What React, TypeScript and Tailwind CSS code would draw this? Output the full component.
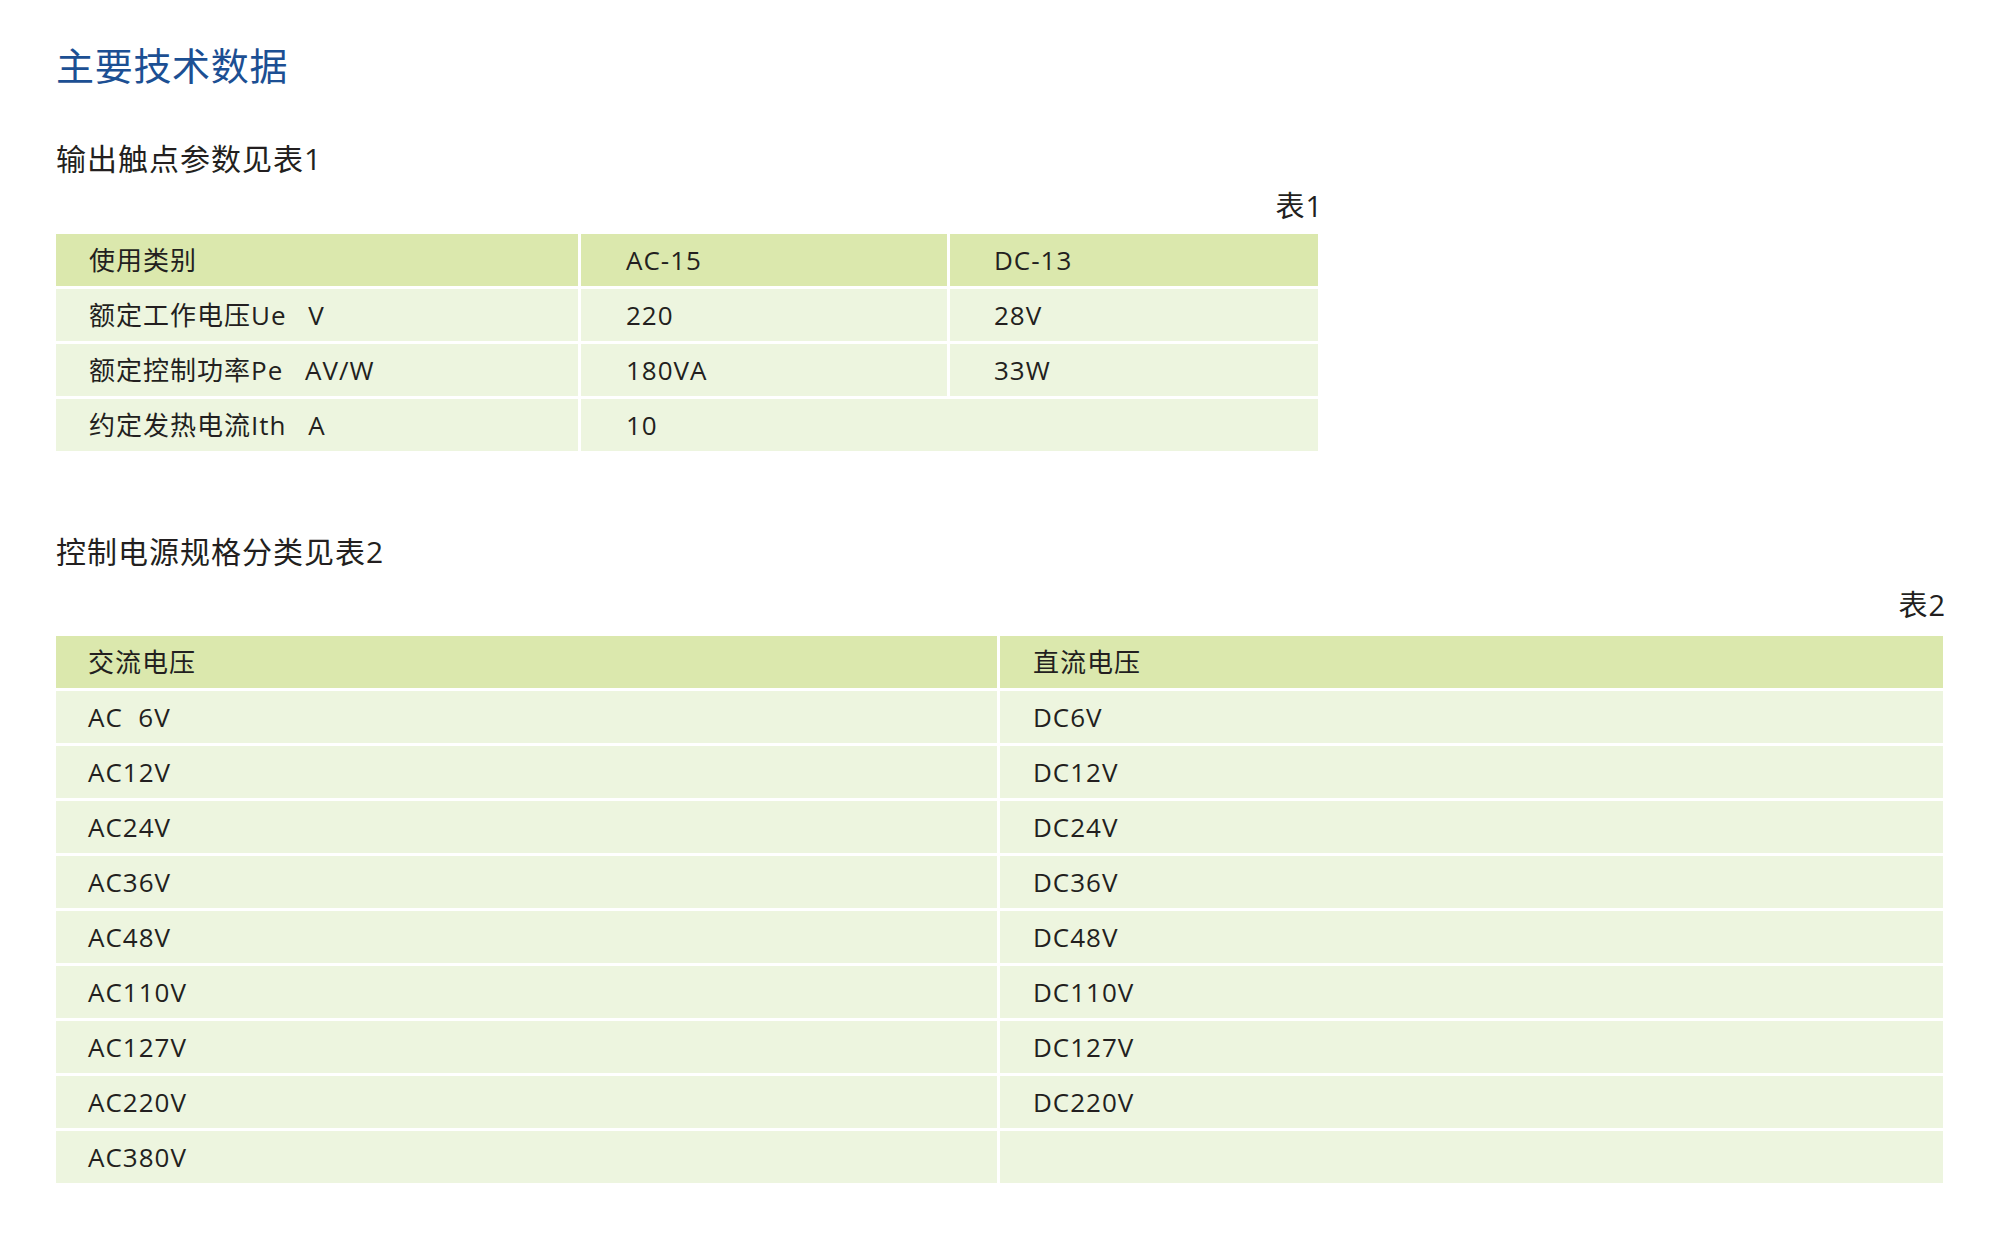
import React from "react";

const font = { fontFamily: '"Open Sans", "Noto Sans CJK SC", sans-serif' };

const t1Rows = [
  ["额定工作电压Ue\u2002 V", "220", "28V"],
  ["额定控制功率Pe\u2002 AV/W", "180VA", "33W"],
];

const t2Rows: [string, string][] = [
  ["AC  6V", "DC6V"],
  ["AC12V", "DC12V"],
  ["AC24V", "DC24V"],
  ["AC36V", "DC36V"],
  ["AC48V", "DC48V"],
  ["AC110V", "DC110V"],
  ["AC127V", "DC127V"],
  ["AC220V", "DC220V"],
  ["AC380V", ""],
];

export default function App() {
  return (
    <div
      className="w-[2000px] min-h-[1234px] bg-white pl-[56px] pt-[43px] text-[#231f20]"
      style={font}
    >
      <h1 className="h-[44px] text-[38px] leading-[44px] tracking-[0.7px] text-[#1c4f93] font-normal whitespace-nowrap">
        主要技术数据
      </h1>
      <p className="mt-[52px] h-[40px] text-[30px] leading-[40px] tracking-[1px] whitespace-nowrap">
        输出触点参数见表1
      </p>
      <div className="w-[1267px] mt-[9px] h-[36px] text-[29px] leading-[36px] tracking-[1px] text-right">
        表1
      </div>
      <div className="mt-[10px] w-[1262px] grid grid-cols-[522px_366px_368px] gap-[3px] text-[26px] tracking-[1px]">
        <div className="h-[52px] bg-[#dbe8ad] flex items-center pl-[33px]">使用类别</div>
        <div className="h-[52px] bg-[#dbe8ad] flex items-center pl-[45px]">AC-15</div>
        <div className="h-[52px] bg-[#dbe8ad] flex items-center pl-[44px]">DC-13</div>
        {t1Rows.map((r) => (
          <React.Fragment key={r[0]}>
            <div className="h-[52px] bg-[#edf5df] flex items-center pl-[33px] whitespace-pre">{r[0]}</div>
            <div className="h-[52px] bg-[#edf5df] flex items-center pl-[45px]">{r[1]}</div>
            <div className="h-[52px] bg-[#edf5df] flex items-center pl-[44px]">{r[2]}</div>
          </React.Fragment>
        ))}
        <div className="h-[52px] bg-[#edf5df] flex items-center pl-[33px] whitespace-pre">
          {"约定发热电流Ith\u2002 A"}
        </div>
        <div className="col-span-2 h-[52px] bg-[#edf5df] flex items-center pl-[45px]">10</div>
      </div>

      <p className="mt-[81px] h-[40px] text-[30px] leading-[40px] tracking-[1px] whitespace-nowrap">
        控制电源规格分类见表2
      </p>
      <div className="w-[1890px] mt-[15px] h-[36px] text-[29px] leading-[36px] tracking-[1px] text-right">
        表2
      </div>
      <div className="mt-[13px] w-[1887px] grid grid-cols-[941px_943px] gap-[3px] text-[26px] tracking-[1px]">
        <div className="h-[52px] bg-[#dbe8ad] flex items-center pl-[32px]">交流电压</div>
        <div className="h-[52px] bg-[#dbe8ad] flex items-center pl-[33px]">直流电压</div>
        {t2Rows.map((r) => (
          <React.Fragment key={r[0]}>
            <div className="h-[52px] bg-[#edf5df] flex items-center pl-[32px] whitespace-pre">{r[0]}</div>
            <div className="h-[52px] bg-[#edf5df] flex items-center pl-[33px]">{r[1]}</div>
          </React.Fragment>
        ))}
      </div>
    </div>
  );
}
